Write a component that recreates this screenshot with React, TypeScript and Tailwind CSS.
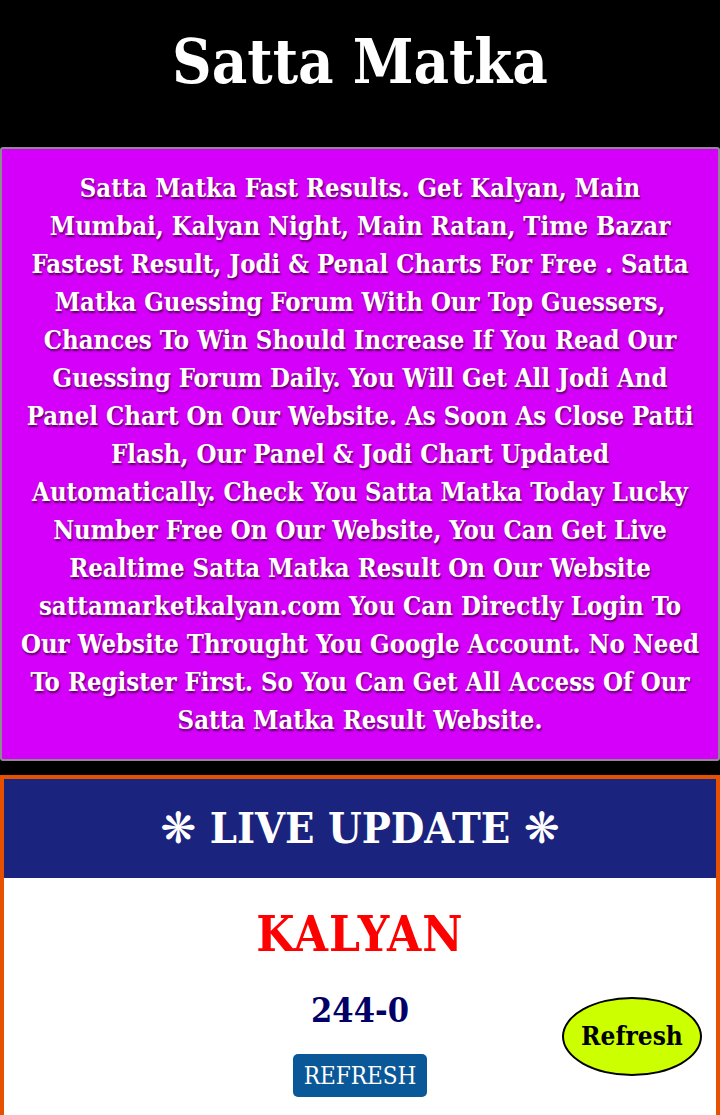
import React from "react";

const lines = [
  "Satta Matka Fast Results. Get Kalyan, Main",
  "Mumbai, Kalyan Night, Main Ratan, Time Bazar",
  "Fastest Result, Jodi & Penal Charts For Free . Satta",
  "Matka Guessing Forum With Our Top Guessers,",
  "Chances To Win Should Increase If You Read Our",
  "Guessing Forum Daily. You Will Get All Jodi And",
  "Panel Chart On Our Website. As Soon As Close Patti",
  "Flash, Our Panel & Jodi Chart Updated",
  "Automatically. Check You Satta Matka Today Lucky",
  "Number Free On Our Website, You Can Get Live",
  "Realtime Satta Matka Result On Our Website",
  "sattamarketkalyan.com You Can Directly Login To",
  "Our Website Throught You Google Account. No Need",
  "To Register First. So You Can Get All Access Of Our",
  "Satta Matka Result Website.",
];

const slab = "font-['DejaVu_Serif_Condensed','DejaVu_Serif',serif]";

export default function App() {
  const refresh = () => {
    window.location.reload();
  };

  return (
    <div className={`relative min-h-[1115px] bg-black ${slab}`}>
      {/* header */}
      <header className="flex h-[147px] justify-center pt-[28px]">
        <h1 className="text-[61px] font-bold leading-[68px] text-white">Satta Matka</h1>
      </header>

      {/* intro text */}
      <div className="rounded-[3px] border-2 border-[#8c8c8c] bg-[#d500f9] px-1 pt-[20px] pb-[20px] text-center">
        <p className="text-[25.5px] font-bold leading-[38px] text-white [text-shadow:1px_2px_2px_#5a0060]">
          {lines.map((l, i) => (
            <span key={i} className="block whitespace-nowrap">
              {l}
            </span>
          ))}
        </p>
      </div>

      {/* live update */}
      <div className="mt-[14px] border-4 border-b-0 border-[#e65100] bg-white">
        <div className="flex h-[99px] items-center justify-center bg-[#1a237e]">
          <h2 className="text-[43px] font-bold leading-none text-white">
            <span className="font-['DejaVu_Sans',sans-serif]">❋</span> LIVE UPDATE{" "}
            <span className="font-['DejaVu_Sans',sans-serif]">❋</span>
          </h2>
        </div>
        <div className="flex h-[238px] flex-col items-center pt-[26px]">
          <div className="text-[49px] font-bold leading-[60px] tracking-[1px] text-[#ff0000]">KALYAN</div>
          <div className="mt-[26px] text-[34px] font-bold leading-[40px] text-[#000066]">244-0</div>
          <button
            onClick={refresh}
            className="mt-[24px] h-[43px] rounded-[5px] bg-[#0b5899] px-[11px] text-[24px] leading-none text-white"
          >
            REFRESH
          </button>
        </div>
      </div>

      {/* floating refresh */}
      <button
        onClick={refresh}
        className="absolute left-[562px] top-[997px] flex h-[79px] w-[140px] items-center justify-center rounded-[50%] border-2 border-black bg-[#ccff00] text-[26px] font-bold text-black"
      >
        Refresh
      </button>
    </div>
  );
}
